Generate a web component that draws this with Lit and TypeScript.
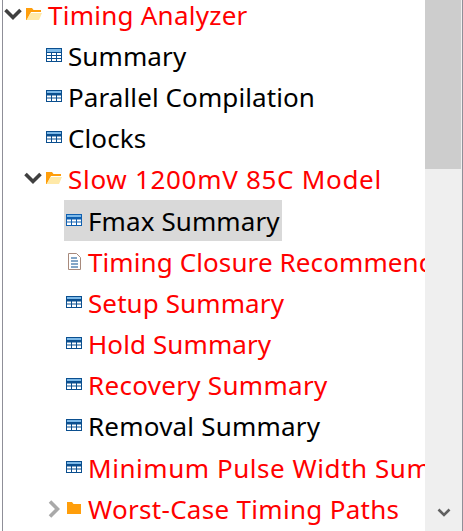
import { LitElement, html, css, svg } from 'lit';
import { customElement } from 'lit/decorators.js';

type Icon = 'open' | 'closed' | 'table' | 'tableTop' | 'doc';

interface Row {
  label: string;
  level: number;
  icon: Icon;
  red?: boolean;
  selected?: boolean;
  arrow?: 'down' | 'right';
  // extra tracking in px, the reference font runs wider on some labels
  track?: number;
}

const ROWS: Row[] = [
  { label: 'Timing Analyzer', level: 0, icon: 'open', red: true, arrow: 'down', track: 0.25 },
  { label: 'Summary', level: 1, icon: 'table' },
  { label: 'Parallel Compilation', level: 1, icon: 'tableTop' },
  { label: 'Clocks', level: 1, icon: 'tableTop' },
  { label: 'Slow 1200mV 85C Model', level: 1, icon: 'open', red: true, arrow: 'down', track: 0.7 },
  { label: 'Fmax Summary', level: 2, icon: 'tableTop', selected: true },
  { label: 'Timing Closure Recommendations', level: 2, icon: 'doc', red: true },
  { label: 'Setup Summary', level: 2, icon: 'tableTop', red: true },
  { label: 'Hold Summary', level: 2, icon: 'tableTop', red: true },
  { label: 'Recovery Summary', level: 2, icon: 'tableTop', red: true, track: 0.3 },
  { label: 'Removal Summary', level: 2, icon: 'tableTop', track: 0.2 },
  { label: 'Minimum Pulse Width Summary', level: 2, icon: 'tableTop', red: true, track: 0.55 },
  { label: 'Worst-Case Timing Paths', level: 2, icon: 'closed', red: true, arrow: 'right', track: 0.3 },
];

const ICONS: Record<Icon, unknown> = {
  open: svg`
    <path d="M2 14V2h6l1.500 2H17v2H7l-4 8z" fill="#ff9e0b"/>
    <path d="M2.500 14l4-7H18l-3 7z" fill="#ffe9a8"/>`,
  closed: svg`
    <path d="M3 14V2h5l1.500 2H17v10z" fill="#ff9e0b"/>`,
  table: svg`
    <rect x="2.500" y="1.500" width="15" height="13" fill="#fff" stroke="currentColor"/>
    <rect x="3" y="2" width="14" height="3" fill="#7db9e8"/>
    <path d="M3 5.500h14M3 8.500h14M3 11.500h14M7.500 5v9M12.500 5v9" stroke="currentColor" fill="none"/>`,
  tableTop: svg`
    <rect x="2" y="2" width="16" height="12" fill="currentColor"/>
    <rect x="3" y="3" width="14" height="2" fill="#7db9e8"/>
    <path d="M3 7.500h4v2H3zM8 7.500h4v2H8zM13 7.500h4v2h-4zM3 10.500h4V13H3zM8 10.500h4V13H8zM13 10.500h4V13h-4z" fill="#fff"/>`,
  doc: svg`
    <path d="M4.500 .5h8l4 4v12h-12z" fill="#fff" stroke="#a88a7c"/>
    <path d="M7 5h6M7 8h7M7 11h7M7 14h7" stroke="currentColor" fill="none"/>`,
};

@customElement('app-root')
export class AppRoot extends LitElement {
  static styles = css`
    :host {
      display: flex;
      width: 463px;
      height: 531px;
      overflow: hidden;
      background: #fff;
      box-sizing: border-box;
      padding-left: 2px;
      font-family: 'Noto Sans', 'Open Sans', sans-serif;
    }
    .edge {
      flex: none;
      width: 1px;
      margin-right: 1px;
      background: #8f8f98;
    }
    .tree {
      flex: none;
      width: 421px;
      overflow: hidden;
      display: flex;
      flex-direction: column;
      margin-top: -6px;
    }
    .row {
      flex: none;
      height: 41.200px;
      display: flex;
      align-items: center;
      white-space: nowrap;
    }
    .level-0 { padding-left: 0; }
    .level-1 { padding-left: 20px; }
    .level-2 { padding-left: 40px; }
    .arrow {
      flex: none;
      width: 18px;
      height: 14px;
      margin-right: 2px;
    }
    .arrow-right {
      width: 12px;
      height: 18px;
      margin: 0 4px;
    }
    .spacer {
      flex: none;
      width: 20px;
    }
    .item {
      display: flex;
      align-items: center;
      height: 41px;
      padding-right: 2px;
    }
    .item.selected {
      background: #d9d9d9;
    }
    .icon {
      flex: none;
      width: 18px;
      height: 18px;
      margin-right: 6px;
      color: #0b4f8f;
    }
    .selected .icon {
      color: #1060b0;
    }
    .label {
      font-size: 26px;
      line-height: 26px;
      letter-spacing: 0.100px;
      color: #000;
    }
    .red {
      color: #f00;
    }
    .scrollbar {
      flex: none;
      width: 37px;
      background: #efefef;
      display: flex;
      flex-direction: column;
      justify-content: space-between;
      align-items: center;
    }
    .thumb {
      align-self: flex-start;
      width: 36px;
      height: 169px;
      background: #cdcdcd;
    }
    .scroll-down {
      width: 14px;
      height: 10px;
      margin-bottom: 13px;
    }
    .frame {
      flex: none;
      width: 1px;
      background: #8f8f98;
    }
  `;

  renderArrow(row: Row) {
    if (row.arrow === 'down') {
      return html`<svg class="arrow" viewBox="0 0 18 14">
        <path d="M1.500 2L9 9.500 16.500 2" fill="none" stroke="#404040" stroke-width="3.600"/>
      </svg>`;
    }
    if (row.arrow === 'right') {
      return html`<svg class="arrow arrow-right" viewBox="0 0 12 18">
        <path d="M2 1.500L9.500 9 2 16.500" fill="none" stroke="#a9a9a9" stroke-width="3.600"/>
      </svg>`;
    }
    return html`<span class="spacer"></span>`;
  }

  renderRow(row: Row) {
    const track = row.track ? `letter-spacing:${row.track}px` : '';
    return html`
      <div class="row level-${row.level}">
        ${this.renderArrow(row)}
        <div class="item ${row.selected ? 'selected' : ''}">
          <svg class="icon" viewBox="0 0 18 18">${ICONS[row.icon]}</svg>
          <span class="label ${row.red ? 'red' : ''}" style=${track}>${row.label}</span>
        </div>
      </div>
    `;
  }

  render() {
    return html`
      <div class="edge"></div>
      <div class="tree">${ROWS.map((r) => this.renderRow(r))}</div>
      <div class="scrollbar">
        <div class="thumb"></div>
        <svg class="scroll-down" viewBox="0 0 14 10">
          <path d="M1.500 1.500L7 7l5.500-5.500" fill="none" stroke="#606060" stroke-width="2.600"/>
        </svg>
      </div>
      <div class="frame"></div>
    `;
  }
}
